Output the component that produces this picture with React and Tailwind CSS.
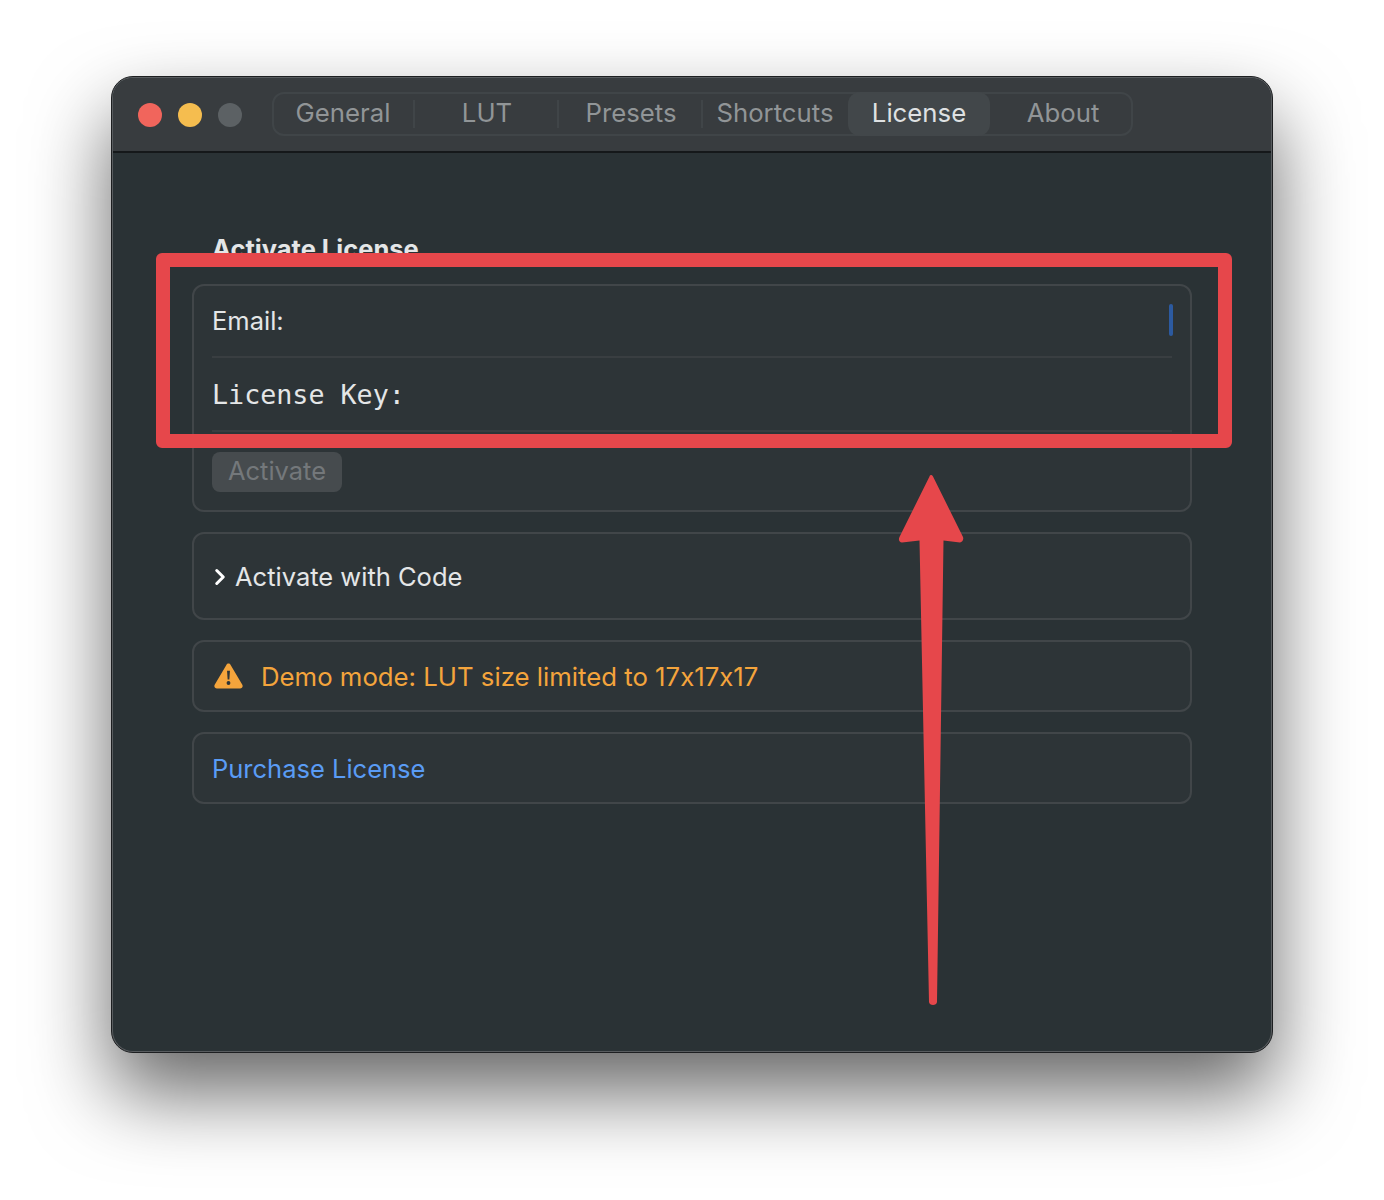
import React from 'react'
import { ChevronRight } from 'lucide-react'

const tabs = ['General', 'LUT', 'Presets', 'Shortcuts', 'License', 'About']
const cardClass = 'rounded-[12px] border-2 border-[#414649] bg-[#2d3437]'

function Tabs() {
    return (
        <div className="relative mb-[2px] ml-[30px] h-[44px] w-[861px] rounded-[12px] border-2 border-[#404548] text-[25.75px]">
            <div className="-ml-[3px] -mt-[2px] grid h-[44px] grid-cols-[repeat(6,144px)]">
                {tabs.map((tab, i) => (
                    <div key={tab} className="relative flex items-center justify-center">
                        {tab === 'License' ? (
                            <div className="flex h-[44px] w-[142px] items-center justify-center rounded-[12px] bg-[#42474a] text-[#dfe1e2]">{tab}</div>
                        ) : (
                            <span className="text-[#919597]">{tab}</span>
                        )}
                        {i < 3 && <div className="absolute right-0 top-[8px] h-[28px] w-[2px] bg-[#404548]"></div>}
                    </div>
                ))}
            </div>
        </div>
    )
}

function Annotations() {
    return (
        <>
            <div className="absolute left-[43px] top-[175px] h-[195px] w-[1076px] rounded-[6px] border-[14px] border-[#e6474b]"></div>
            <svg className="absolute left-[779px] top-[394px]" width="90" height="536" viewBox="0 0 90 536">
                <path
                    d="M37.500 4.500 C38 2.500 40 2.500 41 4.500 L71 65 C72 68 70 70.500 68 70.500 L51.500 68.500 L45 530 C44.800 534 37.200 534 37 530 L27.500 68.500 L10 70.500 C7.500 70.500 6 68 7.500 65 Z"
                    fill="#e6474b"
                />
            </svg>
        </>
    )
}

export default function App() {
    return (
        <div className="h-[1200px] w-[1384px] overflow-hidden bg-white pl-[111px] pt-[76px] font-['Inter',sans-serif] text-[25.5px] [font-variant-ligatures:no-contextual]">
            <div className="h-[977px] w-[1162px] rounded-[22px] border border-[#1d1f21] bg-[#585c5f] p-px shadow-[0_40px_80px_rgba(0,0,0,0.6)]">
                <div className="relative h-full overflow-hidden rounded-[20px] bg-[#2a3235]">
                    <header className="flex h-[75px] items-center border-b-2 border-[#15181a] bg-[#383c3f] pl-[25px]">
                        <div className="flex gap-[16px]">
                            <div className="h-[24px] w-[24px] rounded-full bg-[#f1655c]"></div>
                            <div className="h-[24px] w-[24px] rounded-full bg-[#f5bd4f]"></div>
                            <div className="h-[24px] w-[24px] rounded-full bg-[#5c6164]"></div>
                        </div>
                        <Tabs />
                    </header>
                    <main className="px-[79px] pt-[78px]">
                        <h2 className="h-[53px] pl-[20px] font-bold leading-[36px] text-[#e4e6e7]">Activate License</h2>
                        <div className="flex flex-col gap-[20px]">
                            <section className={`${cardClass} h-[228px] px-[18px]`}>
                                <div className="flex h-[72px] items-center justify-between border-b-2 border-[#393e41]">
                                    <span className="text-[#e4e6e7]">Email:</span>
                                    <div className="-mr-px mb-[2px] h-[32px] w-[4px] rounded-full bg-[#2c5aa0]"></div>
                                </div>
                                <div className="flex h-[74px] items-center border-b-2 border-[#393e41] pt-[2px] font-['DejaVu_Sans_Mono',monospace] text-[26.7px] text-[#e4e6e7]">License Key:</div>
                                <button className="mt-[20px] flex h-[40px] w-[130px] items-center justify-center rounded-[8px] bg-[#464b4e] pb-[2px] text-[#74787b]">Activate</button>
                            </section>
                            <section className={`${cardClass} flex h-[88px] items-center pl-[13px] pt-[2px] text-[#e4e6e7]`}>
                                <ChevronRight className="mr-[2px] h-[26px] w-[26px] text-white" strokeWidth={2.8} />
                                Activate with Code
                            </section>
                            <section className={`${cardClass} flex h-[72px] items-center pl-[20px] text-[25.75px] text-[#f4a43c]`}>
                                <svg className="mr-[18px]" width="29" height="26" viewBox="0 0 30 26">
                                    <path fillRule="evenodd" fill="#f4a43c" d="M12.800 1.500 C13.800 -0.300 16.200 -0.300 17.200 1.500 L29.300 22 C30.300 23.900 29 26 26.900 26 L3.100 26 C1 26 -0.300 23.900 0.700 22 Z M13.500 7.500 L14.100 16.500 L15.900 16.500 L16.500 7.500 Z M15 18.300 A2 2 0 1 0 15 22.300 A2 2 0 1 0 15 18.300 Z" />
                                </svg>
                                <span className="pt-[2px]">Demo mode: LUT size limited to 17x17x17</span>
                            </section>
                            <section className={`${cardClass} flex h-[72px] items-center pl-[18px] pt-[2px] text-[#5a9cf5]`}>Purchase License</section>
                        </div>
                    </main>
                    <Annotations />
                </div>
            </div>
        </div>
    )
}
